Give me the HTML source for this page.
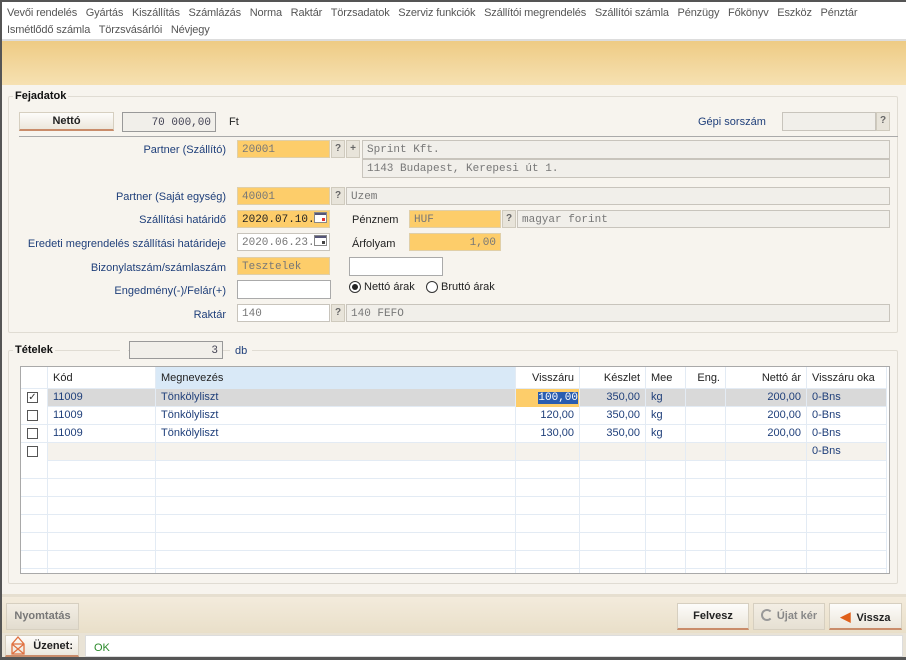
<!DOCTYPE html>
<html><head><meta charset="utf-8"><style>
*{box-sizing:border-box;margin:0;padding:0}
body{width:906px;height:660px;overflow:hidden;background:#f7f4ee;font-family:"Liberation Sans",sans-serif;font-size:11px;color:#1f3f7a;position:relative}
.a{position:absolute;white-space:nowrap}
.menu{color:#555;font-size:11px;letter-spacing:-0.15px}
.lbl{text-align:right;color:#1f3f7a}
.box{position:absolute;border:1px solid #c8c4bc;background:#f1efea;font-family:"Liberation Mono",monospace;font-size:11px;color:#777;padding:3px 4px 1px;line-height:12px;white-space:nowrap}
.or{background:#fdcd6a;border-color:#e0cfa8}
.wh{background:#fff}
.q{position:absolute;width:14px;height:18px;background:#e8e4da;border:1px solid #cfcabd;color:#666;font-size:10px;text-align:center;line-height:16px;font-weight:bold}
.grid{position:absolute;left:20px;top:366px;width:870px;height:208px;background:#fff;border:1px solid #a9a9a9}
.row{position:absolute;left:0;width:866px;height:18px;border-bottom:1px solid #e3ebf4}
.c{position:absolute;top:0;height:18px;line-height:17px;border-right:1px solid #e3ebf4;padding:0 5px;overflow:hidden;white-space:nowrap}
.r{text-align:right}
.cb{position:absolute;left:6px;top:3px;width:11px;height:11px;border:1px solid #555;background:#fff}
.btn{position:absolute;border:1px solid #d6cfc0;background:linear-gradient(#fdfcfa,#ece7dc);font-family:"Liberation Sans Narrow","Liberation Sans",sans-serif;font-size:11px;font-weight:bold;color:#222;text-align:center}
</style></head><body>
<div class="a" style="left:0;top:0;width:906px;height:2px;background:#555"></div>
<div class="a" style="left:0;top:0;width:2px;height:660px;background:#555"></div>
<div class="a" style="left:2px;top:2px;width:904px;height:37px;background:#fff"></div>
<div class="a menu" style="left:7px;top:7px">Vevői rendelés&nbsp;&nbsp; Gyártás&nbsp;&nbsp; Kiszállítás&nbsp;&nbsp; Számlázás&nbsp;&nbsp; Norma&nbsp;&nbsp; Raktár&nbsp;&nbsp; Törzsadatok&nbsp;&nbsp; Szerviz funkciók&nbsp;&nbsp; Szállítói megrendelés&nbsp;&nbsp; Szállítói számla&nbsp;&nbsp; Pénzügy&nbsp;&nbsp; Főkönyv&nbsp;&nbsp; Eszköz&nbsp;&nbsp; Pénztár</div>
<div class="a menu" style="left:7px;top:24px">Ismétlődő számla&nbsp;&nbsp; Törzsvásárlói&nbsp;&nbsp; Névjegy</div>
<div class="a" style="left:2px;top:39px;width:904px;height:2px;background:#ddd"></div>
<div class="a" style="left:2px;top:41px;width:904px;height:44px;background:linear-gradient(#eecb84,#f6e1b2)"></div>

<!-- Fejadatok -->
<div class="a" style="left:8px;top:96px;width:890px;height:237px;border:1px solid #e0dcd3;border-radius:2px"></div>
<div class="a" style="left:13px;top:90px;background:#f7f4ee;padding:0 2px;font-weight:bold;color:#111;font-size:11px">Fejadatok</div>
<div class="btn" style="left:19px;top:112px;width:95px;height:19px;line-height:17px;border-bottom:2px solid #c98c6a;font-family:'Liberation Sans',sans-serif">Nettó</div>
<div class="box" style="left:122px;top:112px;width:94px;height:20px;text-align:right;color:#445;border-color:#999;padding-top:4px">70 000,00</div>
<div class="a" style="left:229px;top:116px;color:#222">Ft</div>
<div class="a" style="left:698px;top:116px">Gépi sorszám</div>
<div class="box" style="left:782px;top:112px;width:94px;height:19px"></div>
<div class="q" style="left:876px;top:112px;height:19px">?</div>
<div class="a" style="left:19px;top:136px;width:879px;height:1px;background:#aaa"></div>

<div class="a lbl" style="left:0;width:226px;top:144px">Partner (Szállító)</div>
<div class="box or" style="left:237px;top:140px;width:93px;height:18px">20001</div>
<div class="q" style="left:331px;top:140px">?</div>
<div class="q" style="left:346px;top:140px">+</div>
<div class="box" style="left:362px;top:140px;width:528px;height:19px">Sprint Kft.</div>
<div class="box" style="left:362px;top:159px;width:528px;height:19px">1143 Budapest, Kerepesi út 1.</div>

<div class="a lbl" style="left:0;width:226px;top:191px">Partner (Saját egység)</div>
<div class="box or" style="left:237px;top:187px;width:93px;height:18px">40001</div>
<div class="q" style="left:331px;top:187px">?</div>
<div class="box" style="left:346px;top:187px;width:544px;height:18px">Uzem</div>

<div class="a lbl" style="left:0;width:226px;top:214px">Szállítási határidő</div>
<div class="box or" style="left:237px;top:210px;width:93px;height:18px;color:#222">2020.07.10.</div>
<div class="a" style="left:314px;top:212px;width:13px;height:11px;border:1px solid #888;background:#fff"><div style="position:absolute;top:0;left:0;right:0;height:2px;background:#557"></div><div style="position:absolute;top:5px;left:7px;width:3px;height:3px;background:#d33"></div></div>
<div class="a" style="left:352px;top:214px;color:#222">Pénznem</div>
<div class="box or" style="left:409px;top:210px;width:92px;height:18px">HUF</div>
<div class="q" style="left:502px;top:210px">?</div>
<div class="box" style="left:517px;top:210px;width:373px;height:18px">magyar forint</div>

<div class="a lbl" style="left:0;width:226px;top:238px">Eredeti megrendelés szállítási határideje</div>
<div class="box wh" style="left:237px;top:233px;width:93px;height:18px">2020.06.23.</div>
<div class="a" style="left:314px;top:235px;width:13px;height:11px;border:1px solid #888;background:#fff"><div style="position:absolute;top:0;left:0;right:0;height:2px;background:#557"></div><div style="position:absolute;top:5px;left:7px;width:3px;height:3px;background:#444"></div></div>
<div class="a" style="left:352px;top:238px;color:#222">Árfolyam</div>
<div class="box or" style="left:409px;top:233px;width:92px;height:18px;text-align:right">1,00</div>

<div class="a lbl" style="left:0;width:226px;top:262px">Bizonylatszám/számlaszám</div>
<div class="box or" style="left:237px;top:257px;width:93px;height:18px">Tesztelek</div>
<div class="box wh" style="left:349px;top:257px;width:94px;height:19px;border-color:#aaa"></div>

<div class="a lbl" style="left:0;width:226px;top:285px">Engedmény(-)/Felár(+)</div>
<div class="box wh" style="left:237px;top:280px;width:94px;height:19px;border-color:#aaa"></div>
<div class="a" style="left:349px;top:281px;width:12px;height:12px;border:1px solid #333;border-radius:50%;background:#fff"><div style="position:absolute;left:2px;top:2px;width:6px;height:6px;border-radius:50%;background:#222"></div></div>
<div class="a" style="left:364px;top:281px;color:#222">Nettó árak</div>
<div class="a" style="left:426px;top:281px;width:12px;height:12px;border:1px solid #333;border-radius:50%;background:#fff"></div>
<div class="a" style="left:441px;top:281px;color:#222">Bruttó árak</div>

<div class="a lbl" style="left:0;width:226px;top:309px">Raktár</div>
<div class="box" style="left:237px;top:304px;width:93px;height:18px;background:#fff">140</div>
<div class="q" style="left:331px;top:304px">?</div>
<div class="box" style="left:346px;top:304px;width:544px;height:18px">140 FEFO</div>

<!-- Tételek -->
<div class="a" style="left:8px;top:350px;width:890px;height:234px;border:1px solid #e0dcd3;border-radius:2px"></div>
<div class="a" style="left:13px;top:344px;background:#f7f4ee;padding:0 2px;font-weight:bold;color:#111;font-size:11px">Tételek</div>
<div class="a" style="left:120px;top:348px;width:8px;height:4px;background:#f7f4ee"></div>
<div class="box" style="left:129px;top:341px;width:94px;height:18px;text-align:right;color:#445;border-color:#999">3</div>
<div class="a" style="left:230px;top:345px;background:#f7f4ee;padding:0 5px">db</div>

<div class="grid">
 <div class="row" style="top:0;height:22px;color:#222">
  <div class="c" style="left:0;width:27px;height:22px"></div>
  <div class="c" style="left:27px;width:108px;height:22px;line-height:22px">Kód</div>
  <div class="c" style="left:135px;width:360px;height:22px;line-height:22px;background:#d9e9f7">Megnevezés</div>
  <div class="c r" style="left:495px;width:64px;height:22px;line-height:22px">Visszáru</div>
  <div class="c r" style="left:559px;width:66px;height:22px;line-height:22px">Készlet</div>
  <div class="c" style="left:625px;width:40px;height:22px;line-height:22px">Mee</div>
  <div class="c r" style="left:665px;width:40px;height:22px;line-height:22px">Eng.</div>
  <div class="c r" style="left:705px;width:81px;height:22px;line-height:22px">Nettó ár</div>
  <div class="c" style="left:786px;width:80px;height:22px;line-height:22px">Visszáru oka</div>
 </div>
 <div class="row" style="top:22px;background:#d9d9d9">
  <div class="c" style="left:0;width:27px;background:#fff"><div class="cb" style="font-size:10px;line-height:9px;color:#333;text-align:center">✓</div></div>
  <div class="c" style="left:27px;width:108px">11009</div>
  <div class="c" style="left:135px;width:360px">Tönkölyliszt</div>
  <div class="c r" style="left:495px;width:64px;background:#fdcd6a;padding-right:1px"><span style="background:#2a5db0;color:#fff;font-family:'Liberation Mono',monospace">100,00</span></div>
  <div class="c r" style="left:559px;width:66px">350,00</div>
  <div class="c" style="left:625px;width:40px">kg</div>
  <div class="c" style="left:665px;width:40px"></div>
  <div class="c r" style="left:705px;width:81px">200,00</div>
  <div class="c" style="left:786px;width:80px">0-Bns</div>
 </div>
 <div class="row" style="top:40px">
  <div class="c" style="left:0;width:27px"><div class="cb"></div></div>
  <div class="c" style="left:27px;width:108px">11009</div>
  <div class="c" style="left:135px;width:360px">Tönkölyliszt</div>
  <div class="c r" style="left:495px;width:64px">120,00</div>
  <div class="c r" style="left:559px;width:66px">350,00</div>
  <div class="c" style="left:625px;width:40px">kg</div>
  <div class="c" style="left:665px;width:40px"></div>
  <div class="c r" style="left:705px;width:81px">200,00</div>
  <div class="c" style="left:786px;width:80px">0-Bns</div>
 </div>
 <div class="row" style="top:58px">
  <div class="c" style="left:0;width:27px"><div class="cb"></div></div>
  <div class="c" style="left:27px;width:108px">11009</div>
  <div class="c" style="left:135px;width:360px">Tönkölyliszt</div>
  <div class="c r" style="left:495px;width:64px">130,00</div>
  <div class="c r" style="left:559px;width:66px">350,00</div>
  <div class="c" style="left:625px;width:40px">kg</div>
  <div class="c" style="left:665px;width:40px"></div>
  <div class="c r" style="left:705px;width:81px">200,00</div>
  <div class="c" style="left:786px;width:80px">0-Bns</div>
 </div>
 <div class="row" style="top:76px;background:#f5f2ec">
  <div class="c" style="left:0;width:27px;background:#fff"><div class="cb"></div></div>
  <div class="c" style="left:27px;width:108px"></div>
  <div class="c" style="left:135px;width:360px"></div>
  <div class="c" style="left:495px;width:64px"></div>
  <div class="c" style="left:559px;width:66px"></div>
  <div class="c" style="left:625px;width:40px"></div>
  <div class="c" style="left:665px;width:40px"></div>
  <div class="c" style="left:705px;width:81px"></div>
  <div class="c" style="left:786px;width:80px">0-Bns</div>
 </div>
 <div style="position:absolute;left:0;top:94px;width:866px;height:112px;background:
  repeating-linear-gradient(to bottom,transparent 0,transparent 17px,#e3ebf4 17px,#e3ebf4 18px)"></div>
 <div style="position:absolute;top:94px;height:112px;left:26px;width:1px;background:#e3ebf4"></div>
 <div style="position:absolute;top:94px;height:112px;left:134px;width:1px;background:#e3ebf4"></div>
 <div style="position:absolute;top:94px;height:112px;left:494px;width:1px;background:#e3ebf4"></div>
 <div style="position:absolute;top:94px;height:112px;left:558px;width:1px;background:#e3ebf4"></div>
 <div style="position:absolute;top:94px;height:112px;left:624px;width:1px;background:#e3ebf4"></div>
 <div style="position:absolute;top:94px;height:112px;left:664px;width:1px;background:#e3ebf4"></div>
 <div style="position:absolute;top:94px;height:112px;left:704px;width:1px;background:#e3ebf4"></div>
 <div style="position:absolute;top:94px;height:112px;left:785px;width:1px;background:#e3ebf4"></div>
 <div style="position:absolute;top:94px;height:112px;left:865px;width:1px;background:#e3ebf4"></div>
</div>

<!-- bottom toolbar -->
<div class="a" style="left:2px;top:594px;width:904px;height:3px;background:#e6dfd0"></div>
<div class="a" style="left:2px;top:597px;width:904px;height:36px;background:linear-gradient(#f3ebdc,#e9dfc9)"></div>
<div class="btn" style="left:6px;top:603px;width:73px;height:27px;line-height:25px;color:#777;background:linear-gradient(#f3eee4,#e2dccf)">Nyomtatás</div>
<div class="btn" style="left:677px;top:603px;width:72px;height:27px;line-height:25px;border-bottom:2px solid #c98c6a">Felvesz</div>
<div class="btn" style="left:753px;top:603px;width:72px;height:27px;line-height:25px;color:#888;background:linear-gradient(#f3eee4,#e6e0d3)"><span style="display:inline-block;width:12px;height:12px;border:2px solid #999;border-right-color:transparent;border-radius:50%;vertical-align:-2px;margin-right:4px"></span>Újat kér</div>
<div class="btn" style="left:829px;top:603px;width:73px;height:27px;line-height:25px;border-bottom:2px solid #c98c6a"><span style="color:#e0601a;font-size:13px;margin-right:6px">◀</span>Vissza</div>

<div class="a" style="left:2px;top:633px;width:904px;height:24px;background:#e9e3d6"></div>
<div class="btn" style="left:5px;top:635px;width:74px;height:22px;line-height:20px;text-align:right;padding-right:5px;border-bottom:2px solid #c98c6a">Üzenet:</div>
<svg class="a" style="left:10px;top:636px" width="16" height="20" viewBox="0 0 16 20"><path d="M8 1 L14 8 L14 18 L2 18 L2 8 Z M2 8 L14 18 M14 8 L2 18 M2 8 L14 8" fill="none" stroke="#e07040" stroke-width="1.3"/></svg>
<div class="a" style="left:85px;top:635px;width:818px;height:22px;background:#fff;border:1px solid #ddd;color:#2a8a2a;padding:6px 8px 0;font-family:'Liberation Sans Narrow','Liberation Sans',sans-serif">OK</div>
<div class="a" style="left:0;top:657px;width:906px;height:3px;background:#555"></div>
</body></html>
